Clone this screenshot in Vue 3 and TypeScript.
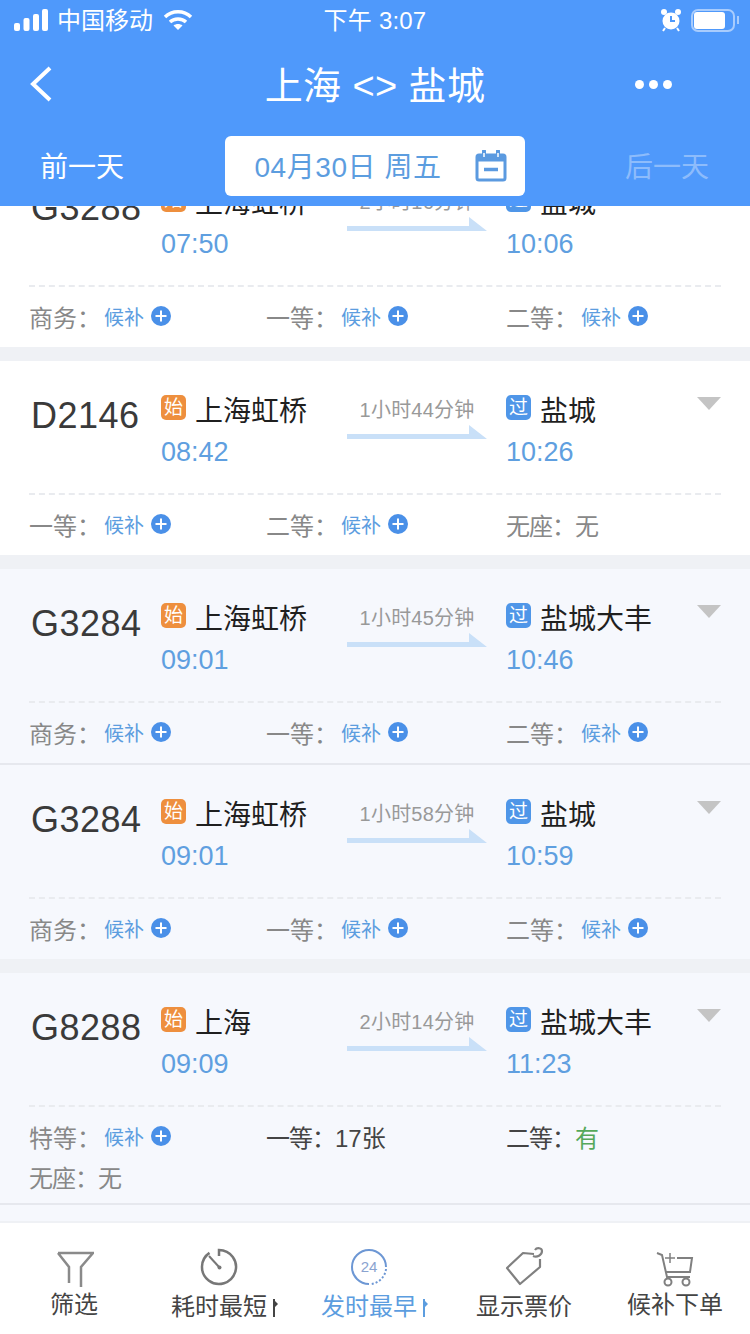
<script setup lang="ts">
interface Seat {
  label: string
  value?: string
  kind?: 'wait' | 'none' | 'count' | 'has'
}
interface Train {
  no: string
  from: string
  to: string
  cost: string
  start: string
  end: string
  tint?: boolean
  seats: Seat[]
}

const wait = (label: string): Seat => ({ label, kind: 'wait' })

const trains: Train[] = [
  { no: 'G3288', from: '上海虹桥', to: '盐城', cost: '2小时16分钟', start: '07:50', end: '10:06', seats: [wait('商务'), wait('一等'), wait('二等')] },
  { no: 'D2146', from: '上海虹桥', to: '盐城', cost: '1小时44分钟', start: '08:42', end: '10:26', seats: [wait('一等'), wait('二等'), { label: '无座', value: '无', kind: 'none' }] },
  { no: 'G3284', from: '上海虹桥', to: '盐城大丰', cost: '1小时45分钟', start: '09:01', end: '10:46', tint: true, seats: [wait('商务'), wait('一等'), wait('二等')] },
  { no: 'G3284', from: '上海虹桥', to: '盐城', cost: '1小时58分钟', start: '09:01', end: '10:59', tint: true, seats: [wait('商务'), wait('一等'), wait('二等')] },
  {
    no: 'G8288', from: '上海', to: '盐城大丰', cost: '2小时14分钟', start: '09:09', end: '11:23', tint: true,
    seats: [wait('特等'), { label: '一等', value: '17张', kind: 'count' }, { label: '二等', value: '有', kind: 'has' }, { label: '无座', value: '无', kind: 'none' }],
  },
]
</script>

<template>
  <div class="page">
    <header class="head">
      <div class="status">
        <div class="status-left">
          <svg class="signal" width="34" height="22" viewBox="0 0 34 22">
            <rect x="0" y="14" width="6" height="8" rx="2" fill="#fff" />
            <rect x="9.500" y="9" width="6" height="13" rx="2" fill="#fff" />
            <rect x="19" y="5" width="6" height="17" rx="2" fill="#fff" />
            <rect x="28" y="0" width="6" height="22" rx="2" fill="#fff" />
          </svg>
          <span class="status-text">中国移动</span>
          <svg class="wifi" width="30" height="22" viewBox="0 0 30 22" fill="none" stroke="#fff" stroke-width="3.400">
            <path d="M2 8 C9 1 21 1 28 8" />
            <path d="M7 13 C11 9 19 9 23 13" />
            <path d="M15 21 L10.500 16.500 C13 14.500 17 14.500 19.500 16.500 Z" fill="#fff" stroke="none" />
          </svg>
        </div>
        <div class="status-time">下午 3:07</div>
        <div class="status-right">
          <svg width="22" height="24" viewBox="0 0 22 24">
            <circle cx="11" cy="13" r="8.500" fill="#fff" />
            <circle cx="4" cy="4" r="3" fill="#fff" />
            <circle cx="18" cy="4" r="3" fill="#fff" />
            <path d="M11 8 V13 H15" stroke="#4f99fb" stroke-width="2" fill="none" />
            <path d="M5 20 L3 23 M17 20 L19 23" stroke="#fff" stroke-width="2" />
          </svg>
          <div class="battery"><i></i></div>
        </div>
      </div>
      <div class="nav">
        <svg class="back" width="26" height="36" viewBox="0 0 26 36" fill="none" stroke="#fff" stroke-width="4">
          <path d="M22 2 L5 18 L22 34" />
        </svg>
        <div class="nav-title">上海 &lt;&gt; 盐城</div>
        <div class="dots"><i></i><i></i><i></i></div>
      </div>
      <div class="dates">
        <span class="day">前一天</span>
        <div class="date-box">
          <span>04月30日 周五</span>
          <svg width="32" height="32" viewBox="0 0 32 32" fill="none" stroke="#5b9ae0" stroke-width="3">
            <rect x="2" y="5" width="28" height="25" rx="2" />
            <path d="M2 8.500 H30" stroke-width="6" />
            <path d="M9 1 V9 M23 1 V9" stroke-width="4" stroke-linecap="round" />
            <path d="M9 3 V7 M23 3 V7" stroke="#fff" stroke-width="1.500" />
            <path d="M9 19.500 H23" stroke-width="3.500" />
          </svg>
        </div>
        <span class="day off">后一天</span>
      </div>
    </header>

    <main class="list">
      <div class="scroll">
        <section v-for="(t, i) in trains" :key="i" class="card" :class="{ tint: t.tint }">
          <div class="main-row">
            <div class="no">{{ t.no }}</div>
            <div class="stop stop-from">
              <div class="name"><b class="badge orange">始</b>{{ t.from }}</div>
              <div class="time">{{ t.start }}</div>
            </div>
            <div class="cost">
              <div class="cost-text">{{ t.cost }}</div>
              <svg width="140" height="14" viewBox="0 0 140 14">
                <path d="M0 9 H122 V0 L140 14 H0 Z" fill="#c9e0f8" />
              </svg>
            </div>
            <div class="stop stop-to">
              <div class="name"><b class="badge blue">过</b>{{ t.to }}</div>
              <div class="time">{{ t.end }}</div>
            </div>
            <svg class="arrow" width="24" height="13" viewBox="0 0 24 13"><path d="M0 0 H24 L12 13 Z" fill="#c4c4c4" /></svg>
          </div>
          <div class="dash"></div>
          <div class="seats">
            <div v-for="s in t.seats" :key="s.label" class="seat">
              <span class="seat-label" :class="{ dark: s.kind === 'count' || s.kind === 'has', tight: s.kind !== 'wait' }">{{ s.label }}：</span>
              <template v-if="s.kind === 'wait'">
                <span class="wait">候补</span>
                <svg width="20" height="20" viewBox="0 0 20 20">
                  <circle cx="10" cy="10" r="10" fill="#4a90e8" />
                  <path d="M4.500 10 H15.500 M10 4.500 V15.500" stroke="#fff" stroke-width="2" />
                </svg>
              </template>
              <span v-else class="seat-value" :class="s.kind">{{ s.value }}</span>
            </div>
          </div>
        </section>
        <div class="tail"></div>
      </div>
    </main>

    <footer class="foot">
      <div class="tab tab-high">
        <svg width="40" height="40" viewBox="0 0 40 40" fill="none" stroke="#8a8a8a" stroke-width="2.500">
          <path d="M4 3 H39 L27 17 V37 M4 3 L15 17 V33" />
        </svg>
        <span>筛选</span>
      </div>
      <div class="tab">
        <svg width="40" height="40" viewBox="0 0 40 40" fill="none" stroke="#777" stroke-width="2.500">
          <path d="M20 9 V3 A17 17 0 1 1 10.500 5.900" />
          <path d="M10 9 L20 20" stroke-width="2" />
          <circle cx="20.500" cy="20.500" r="2" fill="#777" stroke="none" />
        </svg>
        <span>耗时最短<i class="sort"></i></span>
      </div>
      <div class="tab on">
        <svg width="40" height="40" viewBox="0 0 40 40" fill="none" stroke="#6d97d4" stroke-width="2">
          <path d="M20 37 A17 17 0 1 1 37 20" />
          <path d="M37 22 A17 17 0 0 1 22 37" stroke-dasharray="2 2" />
          <text x="20" y="25" text-anchor="middle" class="clock-num">24</text>
        </svg>
        <span>发时最早<i class="sort"></i></span>
      </div>
      <div class="tab">
        <svg width="40" height="40" viewBox="0 0 40 40" fill="none" stroke="#808080" stroke-width="2.200" stroke-linejoin="round">
          <path d="M30 7 L19 6 L3 21 L16 37 L36 20 V12" />
          <path d="M29 9 C33 11 38 8 38 4 C38 1 33 0 31 3" />
        </svg>
        <span>显示票价</span>
      </div>
      <div class="tab tab-high">
        <svg width="40" height="40" viewBox="0 0 40 40" fill="none" stroke="#808080" stroke-width="2">
          <path d="M2 3 L7 5 L12 27 H35" />
          <path d="M22 8 H37 L35 22 H10" />
          <path d="M15 3 V13 M10 8 H20" stroke-width="1.500" />
          <circle cx="13" cy="32" r="3.500" />
          <circle cx="31" cy="32" r="3.500" />
        </svg>
        <span>候补下单</span>
      </div>
    </footer>
  </div>
</template>

<style>
html,
body {
  margin: 0;
  background: #fff;
}
</style>

<style scoped>
.page {
  width: 750px;
  height: 1334px;
  display: flex;
  flex-direction: column;
  overflow: hidden;
  font-family: "Liberation Sans", "Noto Sans CJK SC", sans-serif;
  color: #333;
  background: #fff;
}

.head {
  height: 206px;
  flex: none;
  position: relative;
  z-index: 2;
  background: #4f99fb;
  color: #fff;
}

.status {
  height: 40px;
  display: flex;
  align-items: center;
  justify-content: space-between;
  padding: 0 15px 0 14px;
  font-size: 24px;
  position: relative;
}

.status-left {
  display: flex;
  align-items: center;
  gap: 9px;
}

.status-text {
  margin-top: -4px;
}

.wifi {
  margin-left: 1px;
}

.status-time {
  position: absolute;
  left: 0;
  right: 0;
  margin-top: -4px;
  text-align: center;
  letter-spacing: 0.2px;
  pointer-events: none;
}

.status-right {
  display: flex;
  align-items: center;
  gap: 9px;
}

.battery {
  width: 44px;
  height: 23px;
  box-sizing: border-box;
  border: 2.500px solid #a8ccfd;
  border-radius: 7px;
  padding: 1px;
  position: relative;
}

.battery::after {
  content: "";
  position: absolute;
  right: -6px;
  top: 5px;
  width: 2px;
  height: 8px;
  background: #a8ccfd;
}

.battery i {
  display: block;
  width: 31px;
  height: 100%;
  background: #fff;
  border-radius: 3px;
}

.nav {
  height: 88px;
  display: flex;
  align-items: center;
  justify-content: space-between;
  padding: 0 78px 0 28px;
  position: relative;
}

.nav-title {
  position: absolute;
  left: 0;
  right: 0;
  margin-top: -4px;
  text-align: center;
  font-size: 38px;
  letter-spacing: 0.4px;
}

.dots {
  display: flex;
  gap: 5px;
}

.dots i {
  width: 9px;
  height: 9px;
  border-radius: 50%;
  background: #fff;
}

.dates {
  display: flex;
  align-items: center;
  justify-content: space-between;
  padding: 8px 41px 0 40px;
}

.day {
  font-size: 28px;
  margin-top: -2px;
}

.day.off {
  color: #8dbcfb;
}

.date-box {
  width: 300px;
  height: 60px;
  box-sizing: border-box;
  padding: 0 18px 0 30px;
  border-radius: 6px;
  background: #fff;
  color: #5c9ddf;
  font-size: 28px;
  letter-spacing: 0.55px;
  display: flex;
  align-items: center;
  justify-content: space-between;
}

.date-box span {
  margin-top: -2px;
}

.list {
  flex: 1;
  min-height: 0;
  overflow: hidden;
}

.scroll {
  margin-top: -53px;
  background: #eff1f5;
}

.card {
  background: #fff;
  margin-bottom: 14px;
  padding: 28px 29px 0 29px;
  min-height: 194px;
  box-sizing: border-box;
}

.card.tint {
  background: #f6f8fd;
}

.card:nth-child(3) {
  margin-bottom: 0;
  border-bottom: 2px solid #e6e8ee;
  min-height: 196px;
}

.card:last-of-type {
  margin-bottom: 0;
  min-height: 232px;
  border-bottom: 2px solid #e6e8ee;
}

.main-row {
  display: flex;
  height: 81px;
  position: relative;
}

.no {
  width: 132px;
  font-size: 36px;
  line-height: 54px;
  letter-spacing: 0.5px;
  padding-left: 2px;
  box-sizing: border-box;
  color: #3a3a3a;
}

.stop-from {
  width: 186px;
}

.name {
  display: flex;
  align-items: center;
  gap: 9px;
  height: 40px;
  font-size: 28px;
  color: #1f1f1f;
  white-space: nowrap;
}

.badge {
  width: 25px;
  height: 25px;
  margin-top: -4px;
  border-radius: 5px;
  color: #fff;
  font-size: 19px;
  font-weight: 400;
  line-height: 25px;
  text-align: center;
}

.orange {
  background: #ee8f3e;
}

.blue {
  background: #4f96e8;
}

.time {
  margin-top: 5px;
  font-size: 27px;
  line-height: 36px;
  color: #5f9fe0;
}

.cost {
  width: 159px;
  text-align: center;
}

.cost svg {
  display: block;
}

.cost-text {
  width: 140px;
  font-size: 20px;
  line-height: 42px;
  height: 36px;
  letter-spacing: 0.2px;
  color: #999;
  white-space: nowrap;
}

.arrow {
  position: absolute;
  right: 0;
  top: 8px;
}

.dash {
  margin-top: 23px;
  border-top: 2px dashed #e9ebef;
}

.seats {
  display: grid;
  grid-template-columns: 237px 240px 1fr;
  margin-top: 9px;
}

.seat {
  height: 40px;
  display: flex;
  align-items: center;
  font-size: 24px;
  color: #888;
}

.seat-label {
  white-space: nowrap;
  width: 75px;
}

.seat-label.tight {
  width: 69px;
  letter-spacing: -1px;
}

.seat-label.dark {
  color: #444;
}

.wait {
  font-size: 20px;
  color: #5c9ddf;
  margin-right: 7px;
}

.seat-value.none {
  color: #888;
}

.seat-value.count {
  color: #444;
}

.seat-value.has {
  color: #55a85a;
}

.tail {
  height: 60px;
  background: #f6f8fd;
}

.foot {
  height: 113px;
  flex: none;
  position: relative;
  z-index: 2;
  box-sizing: border-box;
  border-top: 2px solid #eff1f5;
  background: #fff;
  display: grid;
  grid-template-columns: 148px 142px 158px 152px 150px;
}

.tab {
  display: flex;
  flex-direction: column;
  align-items: center;
  padding-top: 24px;
  font-size: 24px;
  color: #444;
  white-space: nowrap;
}

.tab svg {
  flex: none;
}

.tab span {
  line-height: 34px;
  margin-top: 3px;
  position: relative;
}

.tab-high {
  padding-top: 27px;
}

.tab-high span {
  margin-top: -2px;
}

.tab.on {
  color: #5c9ddf;
}

.clock-num {
  font-size: 15px;
  fill: #8aa3d0;
  stroke: none;
}

.sort {
  position: absolute;
  right: -8px;
  top: 9px;
  width: 2px;
  height: 18px;
  background: currentColor;
}

.sort::before {
  content: "";
  position: absolute;
  left: 0;
  top: 0;
  border-left: 5px solid currentColor;
  border-top: 5px solid transparent;
  border-bottom: 5px solid transparent;
}
</style>
